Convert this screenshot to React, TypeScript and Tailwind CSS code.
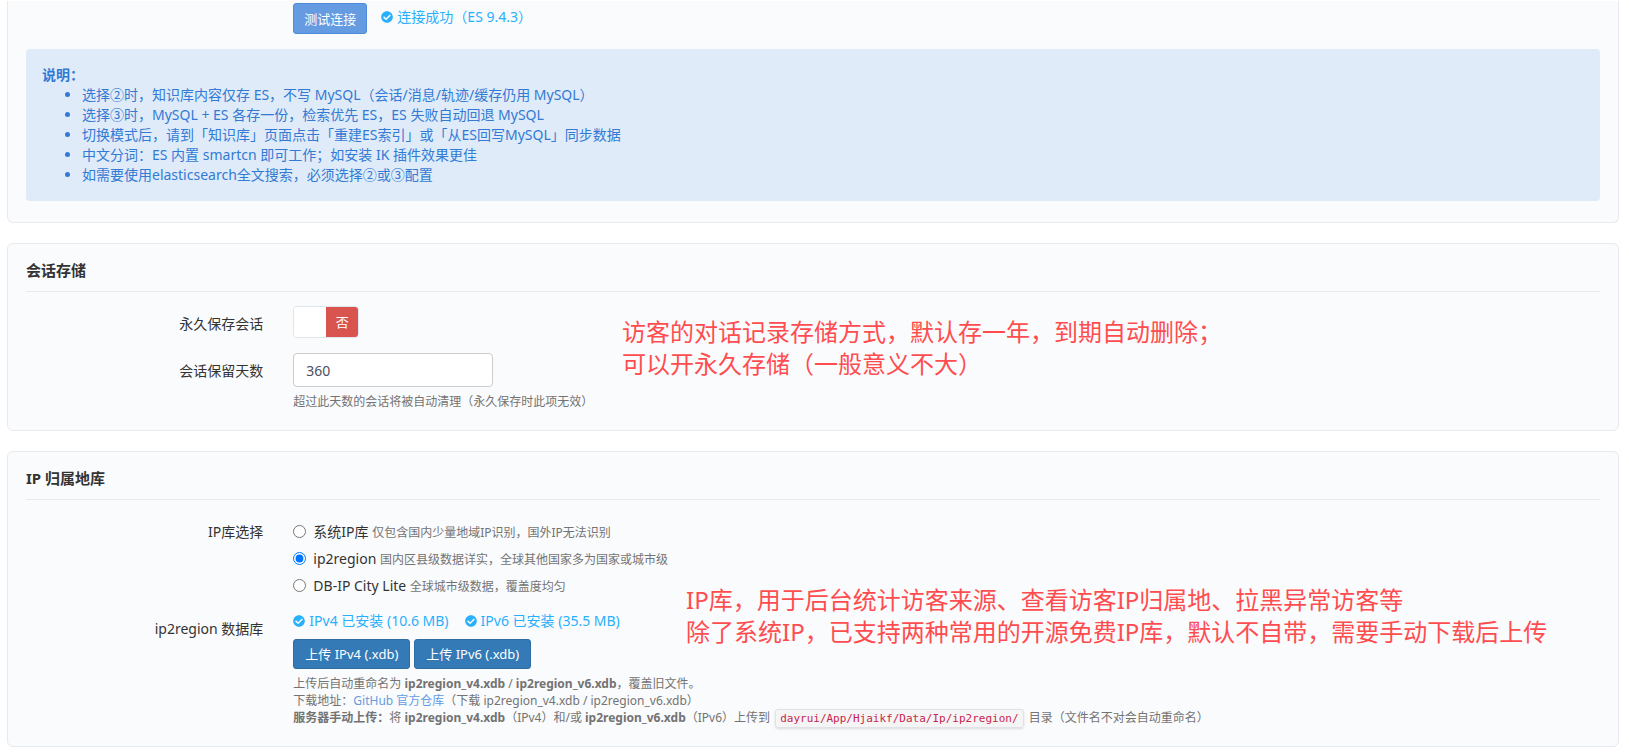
import { useState } from 'react';
import type { ReactNode } from 'react';
import { FaCheckCircle } from 'react-icons/fa';

const notes = [
  '选择②时，知识库内容仅存 ES，不写 MySQL（会话/消息/轨迹/缓存仍用 MySQL）',
  '选择③时，MySQL + ES 各存一份，检索优先 ES，ES 失败自动回退 MySQL',
  '切换模式后，请到「知识库」页面点击「重建ES索引」或「从ES回写MySQL」同步数据',
  '中文分词：ES 内置 smartcn 即可工作；如安装 IK 插件效果更佳',
  '如需要使用elasticsearch全文搜索，必须选择②或③配置',
];

const ipSources = [
  { id: 'system', name: '系统IP库', desc: '仅包含国内少量地域IP识别，国外IP无法识别' },
  { id: 'ip2region', name: 'ip2region', desc: '国内区县级数据详实，全球其他国家多为国家或城市级' },
  { id: 'dbip', name: 'DB-IP City Lite', desc: '全球城市级数据，覆盖度均匀' },
];

const Card = ({ title, children }: { title: string; children: ReactNode }) => (
  <section className="relative mt-5 rounded-md border border-[#e7eaee] bg-[#fafbfd] px-[18px] pt-[15px] pb-5">
    <h2 className="mb-[14px] border-b border-[#e7eaee] pb-[10px] text-[15px] leading-[22px] font-bold">
      {title}
    </h2>
    {children}
  </section>
);

const Row = ({ label, children }: { label?: ReactNode; children: ReactNode }) => (
  <div className="-mx-[15px] flex">
    <div className="w-1/6 shrink-0 px-[15px] pt-2 text-right">{label}</div>
    <div className="min-w-0 flex-1 px-[15px]">{children}</div>
  </div>
);

const Status = ({ children }: { children: ReactNode }) => (
  <span className="inline-flex items-center gap-1 text-[#29b0fc]">
    <FaCheckCircle className="size-3" />
    {children}
  </span>
);

const UploadButton = ({ children }: { children: ReactNode }) => (
  <button
    type="button"
    className="h-[30px] rounded-[3px] border border-[#2e6da4] bg-[#337ab7] px-[11px] text-[13px] leading-5 text-white"
  >
    {children}
  </button>
);

export default function App() {
  const [permanent, setPermanent] = useState(false);
  const [days, setDays] = useState('360');
  const [source, setSource] = useState('ip2region');

  return (
    <div className="min-h-screen bg-white pt-px pr-[10px] pb-1 pl-[7px] font-['Noto_Sans','Noto_Sans_CJK_SC',sans-serif] text-sm leading-5 text-[#333]">
      {/* Elasticsearch */}
      <section className="rounded-b-md border border-t-0 border-[#e7eaee] bg-[#fafbfd] px-[18px] pt-0.5 pb-[21px]">
        <Row>
          <div className="flex items-start gap-[14px]">
            <button
              type="button"
              className="h-[31px] rounded-[3px] border border-[#4e8cdb] bg-[#659be0] px-[10px] text-[13px] leading-5 text-white"
            >
              测试连接
            </button>
            <div className="flex pt-1">
              <Status>连接成功（ES 9.4.3）</Status>
            </div>
          </div>
        </Row>
        <div className="mt-[15px] rounded bg-[#dfebf8] p-4 text-[#327ad5]">
          <strong className="block">说明：</strong>
          <ul className="list-disc pl-10">
            {notes.map((note) => (
              <li key={note}>{note}</li>
            ))}
          </ul>
        </div>
      </section>

      {/* Session storage */}
      <Card title="会话存储">
        <Row label="永久保存会话">
          <button
            type="button"
            role="switch"
            aria-checked={permanent}
            aria-label="永久保存会话"
            onClick={() => setPermanent(!permanent)}
            className="flex h-8 w-[66px] overflow-hidden rounded border border-[#e0e4ec] bg-white text-[13px] text-white"
          >
            {permanent && (
              <span className="flex h-full w-1/2 items-center justify-center bg-[#337ab7]">是</span>
            )}
            <span className="h-full w-1/2 bg-white" />
            {!permanent && (
              <span className="flex h-full w-1/2 items-center justify-center bg-[#d9534f]">否</span>
            )}
          </button>
        </Row>
        <div className="mt-[15px]">
          <Row label={<label htmlFor="days">会话保留天数</label>}>
            <input
              id="days"
              type="text"
              value={days}
              onChange={(e) => setDays(e.target.value)}
              className="block h-[34px] w-[200px] rounded border border-[#ccc] bg-white px-3 text-sm text-[#4d4d5f]"
            />
            <p className="mt-1.5 text-xs leading-[17px] text-[#737373]">
              超过此天数的会话将被自动清理（永久保存时此项无效）
            </p>
          </Row>
        </div>
        <p className="absolute top-[72px] left-[614px] text-2xl leading-8 whitespace-nowrap text-[#ff4d4f]">
          访客的对话记录存储方式，默认存一年，到期自动删除；
          <br />
          可以开永久存储（一般意义不大）
        </p>
      </Card>

      {/* IP database */}
      <Card title="IP 归属地库">
        <Row label="IP库选择">
          <div className="pt-1">
            {ipSources.map((item) => (
              <label key={item.id} className="flex h-[27px] items-center">
                <input
                  type="radio"
                  name="ip-source"
                  checked={source === item.id}
                  onChange={() => setSource(item.id)}
                  className="mr-[7px] size-[13px]"
                />
                <span>
                  {item.name} <small className="text-xs text-[#737373]">{item.desc}</small>
                </span>
              </label>
            ))}
          </div>
        </Row>
        <div className="mt-3">
          <Row label="ip2region 数据库">
            <div className="flex gap-4">
              <Status>IPv4 已安装 (10.6 MB)</Status>
              <Status>IPv6 已安装 (35.5 MB)</Status>
            </div>
            <div className="mt-2 flex gap-1">
              <UploadButton>上传 IPv4 (.xdb)</UploadButton>
              <UploadButton>上传 IPv6 (.xdb)</UploadButton>
            </div>
            <div className="mt-1.5 text-xs leading-[17px] text-[#737373]">
              上传后自动重命名为 <b>ip2region_v4.xdb</b> / <b>ip2region_v6.xdb</b>，覆盖旧文件。
              <br />
              下载地址：
              <a href="#" className="text-[#659be0]">
                GitHub 官方仓库
              </a>
              （下载 ip2region_v4.xdb / ip2region_v6.xdb）
              <br />
              <b>服务器手动上传：</b>将 <b>ip2region_v4.xdb</b>（IPv4）和/或 <b>ip2region_v6.xdb</b>
              （IPv6）上传到{' '}
              <code className="mx-0.5 rounded-[3px] border border-[#e1e1e8] bg-[#f5f5f5] px-1 py-0.5 font-['DejaVu_Sans_Mono',monospace] text-[11px] leading-3 text-[#c7254e] shadow-sm">
                dayrui/App/Hjaikf/Data/Ip/ip2region/
              </code>{' '}
              目录（文件名不对会自动重命名）
            </div>
          </Row>
        </div>
        <p className="absolute top-[132px] left-[678px] text-2xl leading-8 whitespace-nowrap text-[#ff4d4f]">
          IP库，用于后台统计访客来源、查看访客IP归属地、拉黑异常访客等
          <br />
          除了系统IP，已支持两种常用的开源免费IP库，默认不自带，需要手动下载后上传
        </p>
      </Card>
    </div>
  );
}
